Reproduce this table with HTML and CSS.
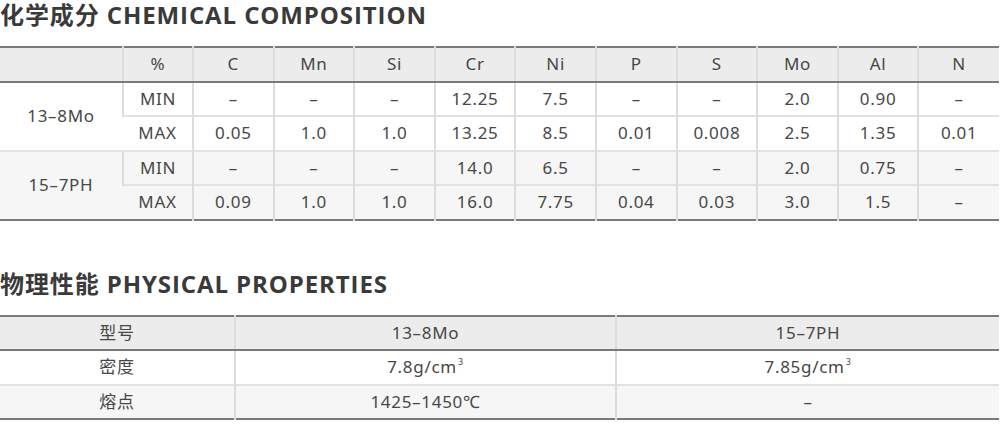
FILE: index.html
```html
<!DOCTYPE html>
<html lang="zh">
<head>
<meta charset="utf-8">
<link rel="stylesheet" href="styles.css">
</head>
<body>
<section class="block">
  <h2 class="title">化学成分 CHEMICAL COMPOSITION</h2>
  <table class="grid chem">
    <colgroup>
      <col class="c-grade"><col class="c-pct">
      <col><col><col><col><col><col><col><col><col><col>
    </colgroup>
    <thead>
      <tr><th></th><th>%</th><th>C</th><th>Mn</th><th>Si</th><th>Cr</th><th>Ni</th><th>P</th><th>S</th><th>Mo</th><th>Al</th><th>N</th></tr>
    </thead>
    <tbody class="g1">
      <tr><td rowspan="2">13–8Mo</td><td>MIN</td><td>–</td><td>–</td><td>–</td><td>12.25</td><td>7.5</td><td>–</td><td>–</td><td>2.0</td><td>0.90</td><td>–</td></tr>
      <tr><td>MAX</td><td>0.05</td><td>1.0</td><td>1.0</td><td>13.25</td><td>8.5</td><td>0.01</td><td>0.008</td><td>2.5</td><td>1.35</td><td>0.01</td></tr>
    </tbody>
    <tbody class="g2">
      <tr><td rowspan="2">15–7PH</td><td>MIN</td><td>–</td><td>–</td><td>–</td><td>14.0</td><td>6.5</td><td>–</td><td>–</td><td>2.0</td><td>0.75</td><td>–</td></tr>
      <tr><td>MAX</td><td>0.09</td><td>1.0</td><td>1.0</td><td>16.0</td><td>7.75</td><td>0.04</td><td>0.03</td><td>3.0</td><td>1.5</td><td>–</td></tr>
    </tbody>
  </table>
</section>
<section class="block second">
  <h2 class="title">物理性能 PHYSICAL PROPERTIES</h2>
  <table class="grid phys">
    <colgroup><col class="p1"><col class="p2"><col class="p3"></colgroup>
    <thead>
      <tr><th>型号</th><th>13–8Mo</th><th>15–7PH</th></tr>
    </thead>
    <tbody>
      <tr><td>密度</td><td>7.8g/cm<sup>3</sup></td><td>7.85g/cm<sup>3</sup></td></tr>
      <tr class="alt"><td>熔点</td><td>1425–1450℃</td><td>–</td></tr>
    </tbody>
  </table>
</section>
</body>
</html>
```
FILE: styles.css
```css
html, body {
  margin: 0;
  padding: 0;
  background: #fff;
}
body {
  width: 1000px;
  font-family: "Noto Sans", "Noto Sans CJK SC", sans-serif;
  color: #444;
}
.title {
  margin: 0;
  font-family: "Open Sans", "Noto Sans CJK SC", sans-serif;
  font-weight: 700;
  font-size: 24px;
  line-height: 30px;
  color: #3a3a3a;
  letter-spacing: 0.9px;
}
.second {
  margin-top: 48px;
}
.grid {
  width: 999px;
  border-collapse: collapse;
  table-layout: fixed;
  margin-top: 16px;
  font-size: 17px;
  letter-spacing: 0.7px;
  color: #474747;
  border-top: 2px solid #7a7a7a;
  border-bottom: 2px solid #7a7a7a;
}
.c-grade { width: 123px; }
.c-pct { width: 70px; }
.p1 { width: 235px; }
.p2 { width: 381px; }
.p3 { width: 383px; }
.grid th, .grid td {
  height: 32.5px;
  padding: 0;
  text-align: center;
  vertical-align: middle;
  font-weight: 400;
  border-left: 2px solid #dcdcdc;
  border-top: 2px solid #e2e2e2;
  line-height: 20px;
}
.grid th:first-child, .grid td:first-child {
  border-left: none;
}
.grid thead th {
  background: #ececec;
  border-top: none;
  border-bottom: 2px solid #7a7a7a;
}
.grid tbody tr:first-child td {
  border-top: none;
}
.chem .g2 td {
  background: #f6f6f6;
  border-top: 2px solid #e2e2e2;
}
.chem .g2 tr:first-child td {
  border-top: 2px solid #e2e2e2;
}
.phys tr.alt td {
  background: #f6f6f6;
  border-top: 2px solid #e2e2e2;
}
sup {
  font-size: 9px;
  line-height: 0;
  vertical-align: 8px;
  margin-left: 1px;
}
```
